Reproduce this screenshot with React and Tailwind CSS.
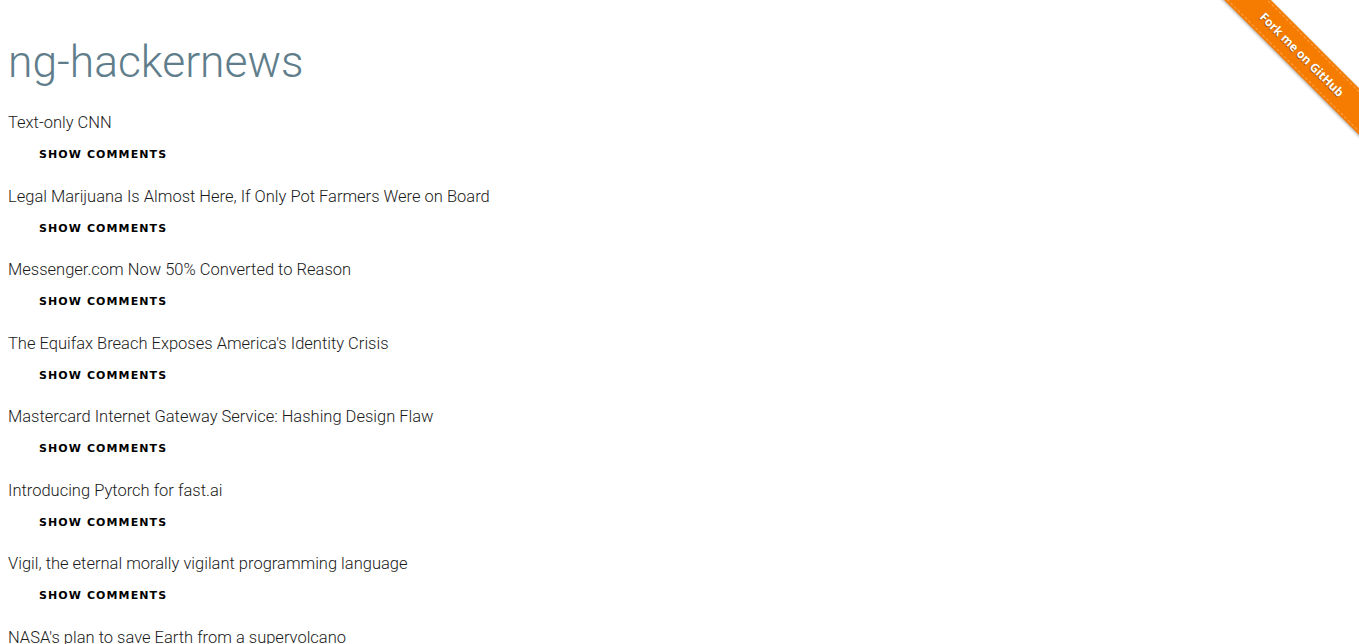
const stories = [
  "Text-only CNN",
  "Legal Marijuana Is Almost Here, If Only Pot Farmers Were on Board",
  "Messenger.com Now 50% Converted to Reason",
  "The Equifax Breach Exposes America's Identity Crisis",
  "Mastercard Internet Gateway Service: Hashing Design Flaw",
  "Introducing Pytorch for fast.ai",
  "Vigil, the eternal morally vigilant programming language",
  "NASA's plan to save Earth from a supervolcano",
];

const ForkRibbon = () => (
  <div className="absolute top-0 right-0 w-[149px] h-[149px] overflow-hidden pointer-events-none">
    <div className="absolute left-[-20px] top-[38px] w-[224px] h-[33px] rotate-45 bg-[#f57c00] shadow-[0_1px_3px_rgba(0,0,0,0.35)] flex items-center justify-center">
      <div className="absolute inset-x-0 top-[2px] border-t border-dashed border-[#ffa24d]" />
      <div className="absolute inset-x-0 bottom-[2px] border-t border-dashed border-[#ffa24d]" />
      <span className="text-white text-[12px] font-bold font-['Open_Sans',sans-serif] [text-shadow:0_1px_1px_rgba(0,0,0,0.4)]">
        Fork me on GitHub
      </span>
    </div>
  </div>
);

const App = () => {
  return (
    <div className="relative min-h-screen bg-white px-2 font-['Roboto',sans-serif]">
      <ForkRibbon />
      <h1 className="pt-[30px] text-[44.4px] leading-[64px] font-light text-[#607d8b]">
        ng-hackernews
      </h1>
      <div className="mt-[17px] flex flex-col">
        {stories.map((story) => (
          <div key={story} className="flex flex-col items-start h-[73.5px]">
            <p className="text-[16.5px] leading-6 font-light text-[#1a1a1a]">
              {story}
            </p>
            <button className="mt-[2.5px] h-9 pl-[31px] text-[11px] font-bold uppercase tracking-[0.1em] text-black font-['DejaVu_Sans',sans-serif]">
              Show comments
            </button>
          </div>
        ))}
      </div>
    </div>
  );
};

export default App;
